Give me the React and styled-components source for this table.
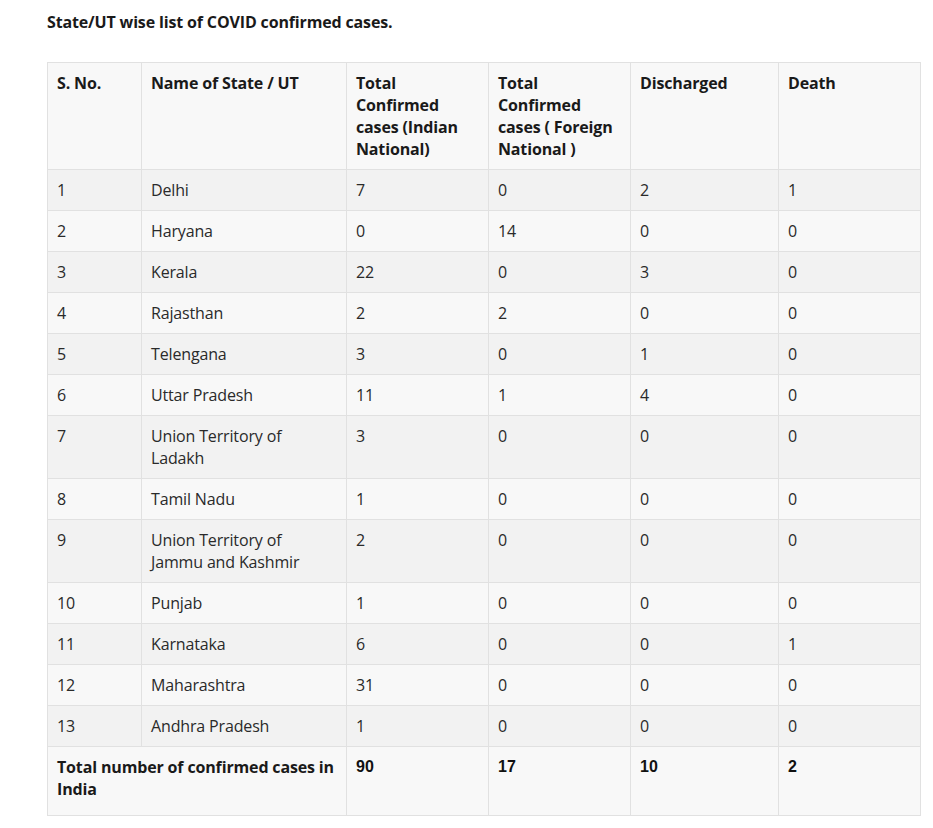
import styled, { createGlobalStyle } from "styled-components";

const GlobalStyle = createGlobalStyle`
  body {
    margin: 0;
    background: #ffffff;
    font-family: "Open Sans", "Liberation Sans", sans-serif;
    color: #222222;
  }
`;

const rows = [
  ["1", "Delhi", "7", "0", "2", "1"],
  ["2", "Haryana", "0", "14", "0", "0"],
  ["3", "Kerala", "22", "0", "3", "0"],
  ["4", "Rajasthan", "2", "2", "0", "0"],
  ["5", "Telengana", "3", "0", "1", "0"],
  ["6", "Uttar Pradesh", "11", "1", "4", "0"],
  ["7", "Union Territory of Ladakh", "3", "0", "0", "0"],
  ["8", "Tamil Nadu", "1", "0", "0", "0"],
  ["9", "Union Territory of Jammu and Kashmir", "2", "0", "0", "0"],
  ["10", "Punjab", "1", "0", "0", "0"],
  ["11", "Karnataka", "6", "0", "0", "1"],
  ["12", "Maharashtra", "31", "0", "0", "0"],
  ["13", "Andhra Pradesh", "1", "0", "0", "0"],
];

const widths = [94, 205, 142, 142, 148, 142];

export default function App() {
  return (
    <>
      <GlobalStyle />
      <Page>
        <Title>State/UT wise list of COVID confirmed cases.</Title>
        <Table>
          <colgroup>
            {widths.map((w, i) => (
              <col key={i} style={{ width: w }} />
            ))}
          </colgroup>
          <tbody>
            <Row $shade="light">
              <HeadCell>S. No.</HeadCell>
              <HeadCell>Name of State / UT</HeadCell>
              <HeadCell>Total Confirmed cases (Indian National)</HeadCell>
              <HeadCell>Total Confirmed cases ( Foreign National )</HeadCell>
              <HeadCell>Discharged</HeadCell>
              <HeadCell>Death</HeadCell>
            </Row>
            {rows.map((r, i) => (
              <Row key={r[0]} $shade={i % 2 === 0 ? "dark" : "light"}>
                {r.map((v, j) => (
                  <Cell key={j}>{v}</Cell>
                ))}
              </Row>
            ))}
            <Row $shade="light">
              <HeadCell colSpan={2} $total>
                Total number of confirmed cases in India
              </HeadCell>
              <TotalNum $total>90</TotalNum>
              <TotalNum $total>17</TotalNum>
              <TotalNum $total>10</TotalNum>
              <TotalNum $total>2</TotalNum>
            </Row>
          </tbody>
        </Table>
      </Page>
    </>
  );
}

const Page = styled.div`
  padding: 11px 13px 12px 47px;
`;

const Title = styled.p`
  margin: 0 0 29px;
  font-size: 16px;
  line-height: 22px;
  font-weight: 700;
  letter-spacing: -0.15px;
  color: #1a1a1a;
`;

const Table = styled.table`
  width: 874px;
  border-collapse: collapse;
  table-layout: fixed;
  font-size: 16px;
  line-height: 22px;
  letter-spacing: -0.15px;
`;

const Row = styled.tr`
  background: ${(p) => (p.$shade === "dark" ? "#f2f2f2" : "#f8f8f8")};
`;

const Cell = styled.td`
  border: 1px solid #e1e1e1;
  padding: 9px 10px ${(p) => (p.$total ? "15px" : "9px")} 9px;
  vertical-align: top;
  color: #2a2a2a;
`;

const HeadCell = styled(Cell)`
  font-weight: 700;
  color: #1a1a1a;
`;

const TotalNum = styled(Cell)`
  font-family: "Liberation Sans", Arial, sans-serif;
  font-weight: 700;
  letter-spacing: 0;
  color: #111111;
`;
